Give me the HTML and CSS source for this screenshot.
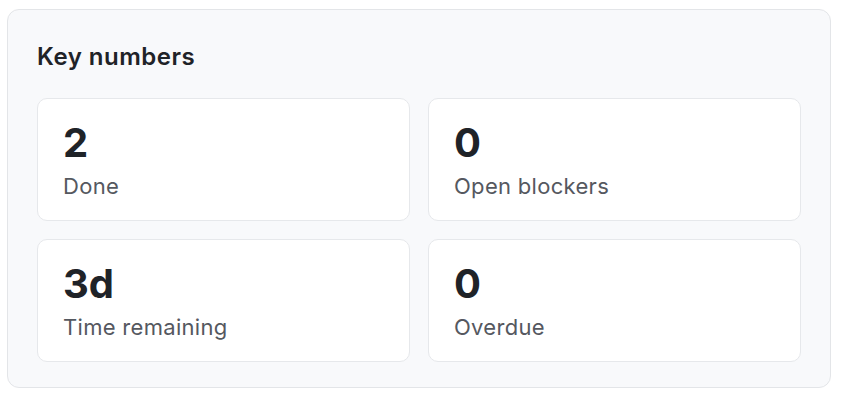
FILE: index.html
```html
<!DOCTYPE html>
<html lang="en">
<head>
    <meta charset="UTF-8">
    <meta name="viewport" content="width=device-width, initial-scale=1.0">
    <title>Key numbers</title>
    <link rel="stylesheet" href="styles.css">
</head>
<body>
    <section class="panel">
        <h2 class="panel-title">Key numbers</h2>

        <div class="stat-grid">
            <div class="stat-card">
                <div class="stat-value">2</div>
                <div class="stat-label">Done</div>
            </div>
            <div class="stat-card">
                <div class="stat-value">0</div>
                <div class="stat-label">Open blockers</div>
            </div>
            <div class="stat-card">
                <div class="stat-value">3d</div>
                <div class="stat-label">Time remaining</div>
            </div>
            <div class="stat-card">
                <div class="stat-value">0</div>
                <div class="stat-label">Overdue</div>
            </div>
        </div>
    </section>
</body>
</html>
```

FILE: styles.css
```css
body {
    margin: 0;
    padding: 9px 13px 0 7px;
    background-color: #ffffff;
    font-family: Inter, "Liberation Sans", sans-serif;
}

.panel {
    background: #f8f9fb;
    border: 1px solid #e3e5e8;
    border-radius: 12px;
    padding: 29px 29px 25px;
}

.panel-title {
    margin: 0 0 23px;
    font-size: 24px;
    line-height: 36px;
    font-weight: 600;
    letter-spacing: 0.5px;
    color: #1f2328;
}

.stat-grid {
    display: grid;
    grid-template-columns: 1fr 1fr;
    gap: 18px;
}

.stat-card {
    background: #ffffff;
    border: 1px solid #e6e8eb;
    border-radius: 10px;
    height: 123px;
    box-sizing: border-box;
    padding: 20px 25px 0;
}

.stat-value {
    font-size: 40px;
    line-height: 48px;
    font-weight: 700;
    color: #1f2328;
}

.stat-label {
    margin-top: 4px;
    font-size: 22px;
    line-height: 30px;
    letter-spacing: 0.3px;
    color: #55585f;
}
```
